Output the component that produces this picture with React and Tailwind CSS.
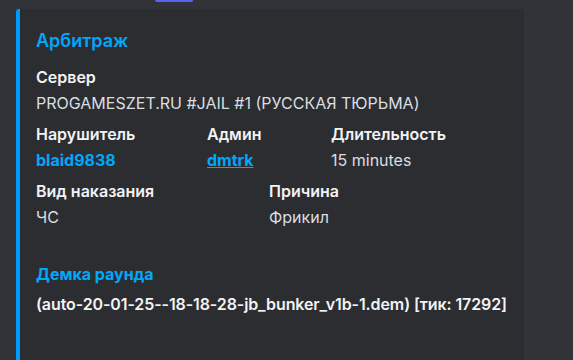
export default function App() {
  const font = { fontFamily: 'Inter, "Noto Sans", sans-serif' };
  return (
    <div className="w-[573px] h-[360px] bg-[#313338] overflow-hidden" style={font}>
      <div className="h-[9px]">
        <div className="ml-[155px] w-[38px] h-[2px] rounded-b-[3px] bg-[#5865f2]" />
      </div>
      <div className="ml-[16px] w-[508px] h-[400px] bg-[#2b2d31] border-l-4 border-[#0099ff] rounded-tl-[3px] pl-[16px] pt-[19px]">
        <div className="text-[18px] leading-[25px] font-semibold text-[#00a8fc]">Арбитраж</div>
        <div className="mt-[13px] flex flex-col gap-y-[9px]">
          <div>
            <div className="text-[16px] leading-[22px] font-semibold text-[#f2f3f5]">Сервер</div>
            <div className="mt-[4px] text-[16px] leading-[22px] text-[#dbdee1]">PROGAMESZET.RU #JAIL #1 (РУССКАЯ ТЮРЬМА)</div>
          </div>
          <div className="flex">
            <div className="w-[171px]">
              <div className="text-[16px] leading-[22px] font-semibold text-[#f2f3f5]">Нарушитель</div>
              <div className="mt-[4px] text-[16px] leading-[22px] font-bold text-[#00a8fc]">blaid9838</div>
            </div>
            <div className="w-[124px]">
              <div className="text-[16px] leading-[22px] font-semibold text-[#f2f3f5]">Админ</div>
              <div className="mt-[4px] text-[16px] leading-[22px] font-bold text-[#00a8fc] underline">dmtrk</div>
            </div>
            <div>
              <div className="text-[16px] leading-[22px] font-semibold text-[#f2f3f5]">Длительность</div>
              <div className="mt-[4px] text-[16px] leading-[22px] text-[#dbdee1]">15 minutes</div>
            </div>
          </div>
          <div className="flex">
            <div className="w-[233px]">
              <div className="text-[16px] leading-[22px] font-semibold text-[#f2f3f5]">Вид наказания</div>
              <div className="mt-[4px] text-[16px] leading-[22px] text-[#dbdee1]">ЧС</div>
            </div>
            <div>
              <div className="text-[16px] leading-[22px] font-semibold text-[#f2f3f5]">Причина</div>
              <div className="mt-[4px] text-[16px] leading-[22px] text-[#dbdee1]">Фрикил</div>
            </div>
          </div>
          <div className="mt-[26px]">
            <div className="text-[16px] leading-[22px] font-bold text-[#00a8fc]">Демка раунда</div>
            <div className="mt-[8px] text-[16px] leading-[22px] font-semibold tracking-[-0.1px] text-[#f2f3f5]">(auto-20-01-25--18-18-28-jb_bunker_v1b-1.dem) [тик: 17292]</div>
          </div>
        </div>
      </div>
    </div>
  );
}
